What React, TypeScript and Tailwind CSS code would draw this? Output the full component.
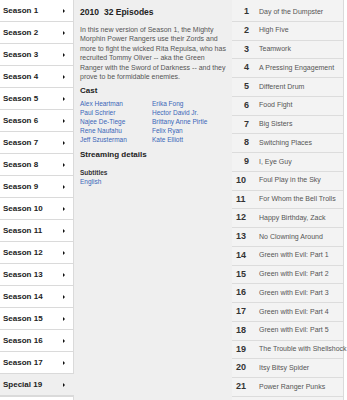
import React from "react";

const seasons = [
  "Season 1","Season 2","Season 3","Season 4","Season 5","Season 6","Season 7","Season 8","Season 9",
  "Season 10","Season 11","Season 12","Season 13","Season 14","Season 15","Season 16","Season 17","Special 19",
];

const episodes = [
  "Day of the Dumpster","High Five","Teamwork","A Pressing Engagement","Different Drum","Food Fight",
  "Big Sisters","Switching Places","I, Eye Guy","Foul Play in the Sky","For Whom the Bell Trolls",
  "Happy Birthday, Zack","No Clowning Around","Green with Evil: Part 1","Green with Evil: Part 2",
  "Green with Evil: Part 3","Green with Evil: Part 4","Green with Evil: Part 5","The Trouble with Shellshock",
  "Itsy Bitsy Spider","Power Ranger Punks",
];

const desc = [
  "In this new version of Season 1, the Mighty",
  "Morphin Power Rangers use their Zords and",
  "more to fight the wicked Rita Repulsa, who has",
  "recruited Tommy Oliver -- aka the Green",
  "Ranger with the Sword of Darkness -- and they",
  "prove to be formidable enemies.",
];

const cast = [
  "Alex Heartman","Erika Fong","Paul Schrier","Hector David Jr.","Najee De-Tiege","Brittany Anne Pirtle",
  "Rene Naufahu","Felix Ryan","Jeff Szusterman","Kate Elliott",
];

function Arrow() {
  return (
    <svg width="2" height="4" viewBox="0 0 2 4" className="block">
      <path d="M0 0 L2 2 L0 4 Z" fill="#111" />
    </svg>
  );
}

export default function App() {
  return (
    <div
      className="flex h-[400px] w-[347px] overflow-hidden bg-white"
      style={{ fontFamily: '"Liberation Sans", Arial, sans-serif' }}
    >
      {/* Seasons */}
      <div className="flex w-[74px] shrink-0 flex-col">
        {seasons.map((s, i) => {
          const sel = i === seasons.length - 1;
          return (
            <div
              key={s}
              className={
                sel
                  ? "flex h-[22px] shrink-0 items-center border-b border-[#dadada] bg-[#efefef] pl-[3px]"
                  : "flex h-[22px] shrink-0 items-center border-b border-r border-[#dadada] bg-white pl-[3px]"
              }
            >
              <span className="w-[60px] text-[8px] font-bold text-[#222]">{s}</span>
              <Arrow />
            </div>
          );
        })}
        <div className="h-[22px] shrink-0 border-r border-t border-[#dadada] bg-white" />
      </div>

      {/* Details */}
      <div className="w-[158px] shrink-0 bg-[#efefef] pl-[6px] pt-[6px]">
        <div className="flex text-[8.5px] font-bold leading-[12px] text-[#222]">
          <span>2010</span>
          <span className="ml-[5px]">32 Episodes</span>
        </div>
        <div className="mt-[7px] text-[7px] leading-[9.4px] text-[#555]">
          {desc.map((l) => (
            <div key={l} className="whitespace-nowrap">{l}</div>
          ))}
        </div>
        <div className="mt-[5px] text-[8px] font-bold leading-[10px] text-[#222]">Cast</div>
        <div className="mt-[2.5px] grid grid-cols-[72px_80px] text-[6.5px] leading-[9px] text-[#3a66b8]">
          {cast.map((c) => (
            <div key={c} className="whitespace-nowrap">{c}</div>
          ))}
        </div>
        <div className="mt-[6.5px] text-[8px] font-bold leading-[10px] text-[#222]">Streaming details</div>
        <div className="mt-[7.5px] text-[6.5px] font-bold leading-[9px] text-[#333]">Subtitles</div>
        <div className="text-[6.5px] leading-[9px] text-[#3a66b8]">English</div>
      </div>

      {/* Episodes */}
      <div className="flex w-[112px] shrink-0 flex-col border-r border-[#dadada] bg-[#f3f3f3] pt-[3px]">
        {episodes.map((e, i) => (
          <div
            key={e}
            className="flex h-[18.75px] shrink-0 items-center border-b border-[#dcdcdc] pl-[4px]"
          >
            <span
              className={
                i + 1 < 10
                  ? "w-[23px] shrink-0 pl-[8px] text-[9px] font-bold text-[#333]"
                  : "w-[23px] shrink-0 text-[9px] font-bold text-[#333]"
              }
            >
              {i + 1}
            </span>
            <span className="whitespace-nowrap text-[7px] text-[#555]">{e}</span>
          </div>
        ))}
        <div className="h-[18.75px] shrink-0" />
      </div>
    </div>
  );
}
